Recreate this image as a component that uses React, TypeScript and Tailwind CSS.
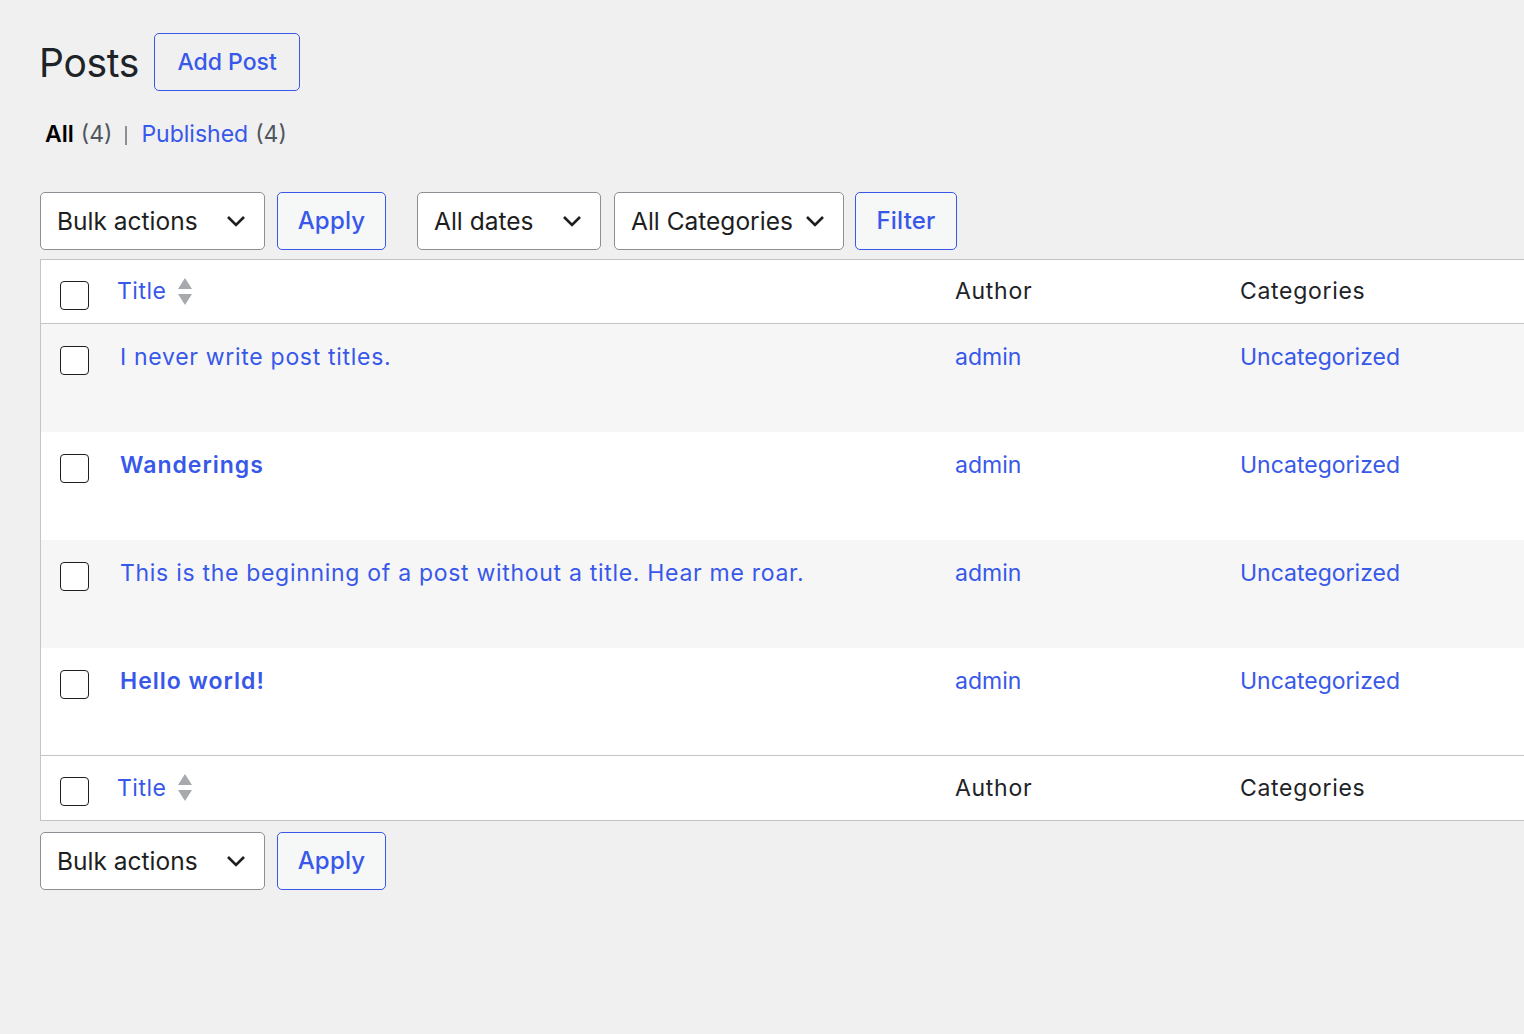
import React from "react";

const Chevron = () => (
  <svg width="20" height="12" viewBox="0 0 20 12" fill="none" className="shrink-0">
    <path d="M2 2l8 8 8-8" stroke="#1e1e1e" strokeWidth="2.6" strokeLinecap="butt" strokeLinejoin="miter" />
  </svg>
);

const Select = ({ label, w }: { label: string; w: string }) => (
  <div
    className={`${w} h-[58px] bg-white border border-[#8c8f94] rounded-[5px] flex items-center justify-between pl-[16px] pr-[18px] text-[24.5px] text-[#1e1e1e]`}
  >
    <span>{label}</span>
    <Chevron />
  </div>
);

const Btn = ({ label, w }: { label: string; w: string }) => (
  <div
    className={`${w} h-[58px] bg-[#f6f7f7] border border-[#3858e9] rounded-[5px] flex items-center justify-center text-[24px] text-[#3858e9] font-medium tracking-[0.2px]`}
  >
    {label}
  </div>
);

const Checkbox = () => (
  <div className="w-[29px] h-[29px] bg-white border border-[#1e1e1e] rounded-[4px]" />
);

const SortIcon = () => (
  <svg width="16" height="28" viewBox="0 0 16 28" className="ml-[11px]">
    <path d="M8 0L15 11H1z" fill="#a7aaad" />
    <path d="M8 27L15 16H1z" fill="#a7aaad" />
  </svg>
);

const HeaderCells = () => (
  <>
    <div className="w-[79px] shrink-0 pl-[19px] pt-[21px]">
      <Checkbox />
    </div>
    <div className="w-[835px] shrink-0 flex items-center ml-[-3px] text-[#3858e9] text-[23px] tracking-[0.5px]">
      <span>Title</span>
      <SortIcon />
    </div>
    <div className="w-[285px] shrink-0 flex items-center text-[23px] text-[#1d2327] ml-[3px] tracking-[0.7px]">Author</div>
    <div className="flex-1 flex items-center text-[23px] text-[#1d2327] tracking-[0.7px]">Categories</div>
  </>
);

const rows = [
  { title: "I never write post titles.", bold: false, h: "h-[108px]" },
  { title: "Wanderings", bold: true, h: "h-[108px]" },
  { title: "This is the beginning of a post without a title. Hear me roar.", bold: false, h: "h-[108px]" },
  { title: "Hello world!", bold: true, h: "h-[107px]" },
];

export default function App() {
  return (
    <div
      className="min-h-[1034px] bg-[#f0f0f1] pl-[40px] pt-[33px]"
      style={{ fontFamily: "Inter, 'Noto Sans', sans-serif" }}
    >
      <div className="flex items-center">
        <h1 className="text-[39px] leading-none text-[#1d2327] font-normal mr-[15px] tracking-[-0.3px] -ml-[1px]">Posts</h1>
        <div className="h-[58px] w-[146px] border border-[#3858e9] rounded-[5px] flex items-center justify-center text-[23px] text-[#3858e9] font-medium">
          Add Post
        </div>
      </div>

      <div className="mt-[27px] ml-[5px] flex items-center text-[23px] h-[32px]">
        <span className="font-semibold text-black">All</span>
        <span className="text-[#50575e] ml-[7px]">(4)</span>
        <div className="w-[2px] h-[19px] bg-[#8c8f94] ml-[13px] mr-[14px] mt-[2px]" />
        <span className="text-[#3858e9]">Published</span>
        <span className="text-[#50575e] ml-[7px]">(4)</span>
      </div>

      <div className="mt-[42px] flex items-center">
        <Select label="Bulk actions" w="w-[225px]" />
        <div className="w-[12px]" />
        <Btn label="Apply" w="w-[109px]" />
        <div className="w-[31px]" />
        <Select label="All dates" w="w-[184px]" />
        <div className="w-[13px]" />
        <Select label="All Categories" w="w-[230px]" />
        <div className="w-[11px]" />
        <Btn label="Filter" w="w-[102px]" />
      </div>

      <div className="mt-[9px] border-l border-t border-b border-[#c3c4c7] bg-white">
        <div className="h-[64px] flex bg-white border-b border-[#c3c4c7]">
          <HeaderCells />
        </div>
        {rows.map((r, i) => (
          <div key={i} className={`flex ${r.h} ${i % 2 === 0 ? "bg-[#f6f6f6]" : "bg-white"}`}>
            <div className="w-[79px] shrink-0 pl-[19px] pt-[22px]">
              <Checkbox />
            </div>
            <div
              className={`w-[835px] shrink-0 pt-[17px] leading-[32px] text-[23px] text-[#3858e9] ${r.bold ? "font-semibold tracking-[1px]" : "tracking-[0.7px]"}`}
            >
              {r.title}
            </div>
            <div className="w-[285px] shrink-0 pt-[17px] leading-[32px] text-[23px] text-[#3858e9]">admin</div>
            <div className="flex-1 pt-[17px] leading-[32px] text-[23px] text-[#3858e9]">Uncategorized</div>
          </div>
        ))}
        <div className="h-[65px] flex bg-white border-t border-[#c3c4c7]">
          <HeaderCells />
        </div>
      </div>

      <div className="mt-[11px] flex items-center">
        <Select label="Bulk actions" w="w-[225px]" />
        <div className="w-[12px]" />
        <Btn label="Apply" w="w-[109px]" />
      </div>
    </div>
  );
}
